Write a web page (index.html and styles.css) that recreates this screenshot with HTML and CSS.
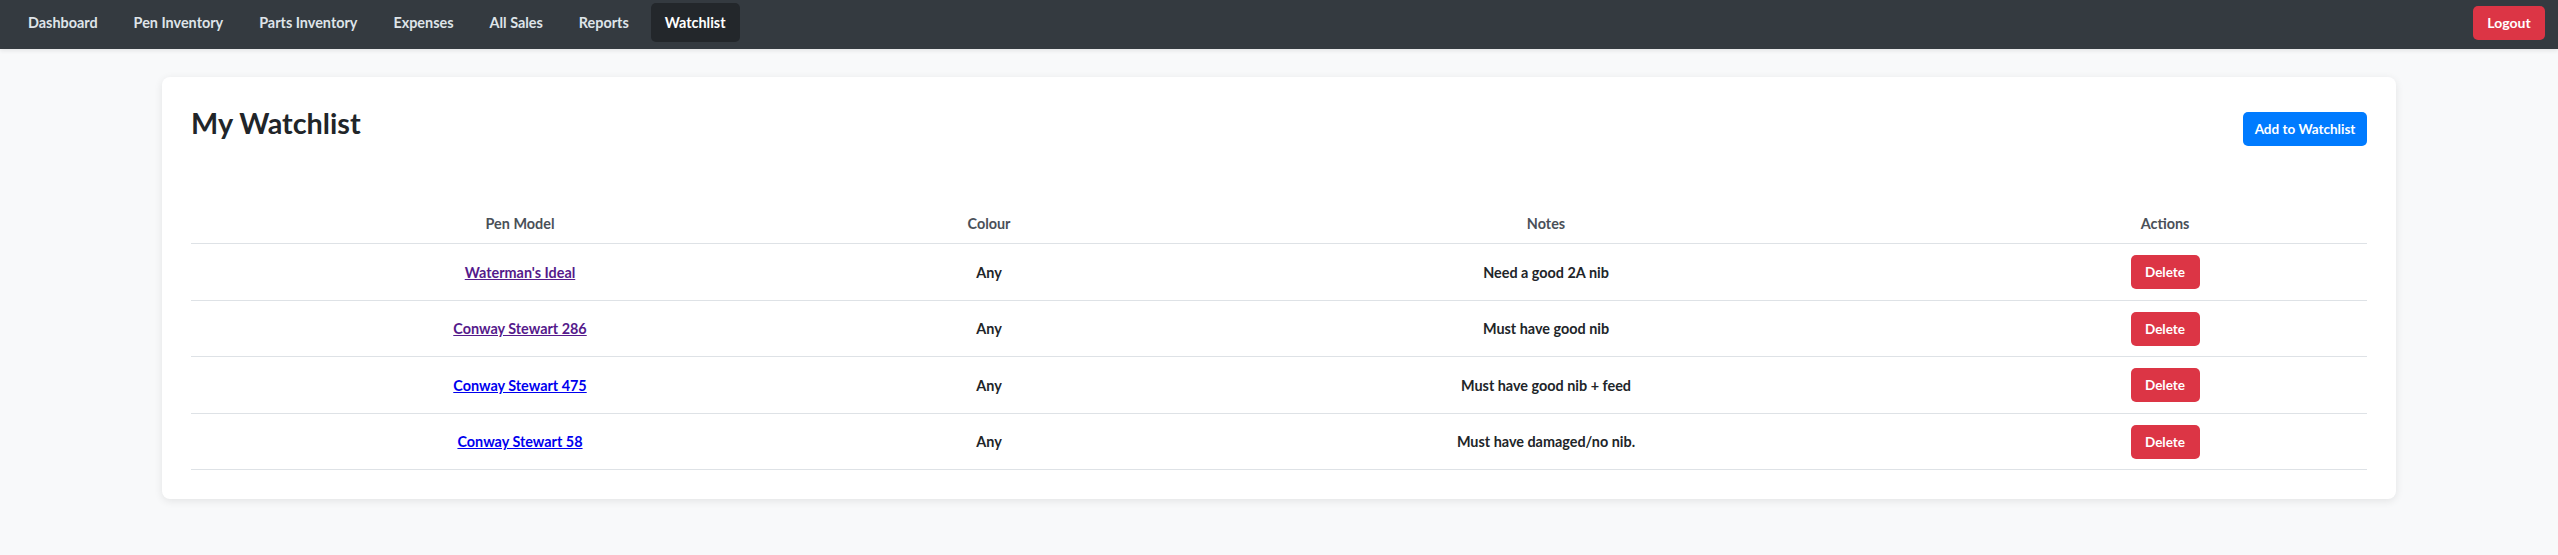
FILE: index.html
```html
<!DOCTYPE html>
<html lang="en">
<head>
<meta charset="utf-8">
<title>My Watchlist</title>
<link rel="stylesheet" href="styles.css">
</head>
<body>
<nav class="navbar">
  <ul class="nav-links">
    <li><a class="nav-link" href="#">Dashboard</a></li>
    <li><a class="nav-link" href="#">Pen Inventory</a></li>
    <li><a class="nav-link" href="#">Parts Inventory</a></li>
    <li><a class="nav-link" href="#">Expenses</a></li>
    <li><a class="nav-link" href="#">All Sales</a></li>
    <li><a class="nav-link" href="#">Reports</a></li>
    <li><a class="nav-link active" href="#">Watchlist</a></li>
  </ul>
  <button class="btn btn-danger btn-logout">Logout</button>
</nav>
<main class="page">
  <section class="card">
    <div class="card-header">
      <h2 class="title">My Watchlist</h2>
      <button class="btn btn-primary btn-add">Add to Watchlist</button>
    </div>
    <table class="watch-table">
      <thead>
        <tr>
          <th class="col-model">Pen Model</th>
          <th class="col-colour">Colour</th>
          <th class="col-notes">Notes</th>
          <th class="col-actions">Actions</th>
        </tr>
      </thead>
      <tbody>
        <tr>
          <td><a class="pen-link visited" href="#">Waterman's Ideal</a></td>
          <td>Any</td>
          <td>Need a good 2A nib</td>
          <td><button class="btn btn-danger btn-delete">Delete</button></td>
        </tr>
        <tr>
          <td><a class="pen-link visited" href="#">Conway Stewart 286</a></td>
          <td>Any</td>
          <td>Must have good nib</td>
          <td><button class="btn btn-danger btn-delete">Delete</button></td>
        </tr>
        <tr>
          <td><a class="pen-link" href="#">Conway Stewart 475</a></td>
          <td>Any</td>
          <td>Must have good nib + feed</td>
          <td><button class="btn btn-danger btn-delete">Delete</button></td>
        </tr>
        <tr>
          <td><a class="pen-link" href="#">Conway Stewart 58</a></td>
          <td>Any</td>
          <td>Must have damaged/no nib.</td>
          <td><button class="btn btn-danger btn-delete">Delete</button></td>
        </tr>
      </tbody>
    </table>
  </section>
</main>
</body>
</html>
```

FILE: styles.css
```css
* { box-sizing: border-box; }

html, body {
  margin: 0;
  padding: 0;
}

body {
  background: #f8f9fa;
  font-family: Lato, "Open Sans", "Liberation Sans", sans-serif;
  color: #212529;
  font-size: 14.4px;
  line-height: 1.5;
}

.navbar {
  display: flex;
  align-items: center;
  justify-content: space-between;
  height: 49px;
  padding: 3px 13px 7px 14px;
  background: #343a40;
  box-shadow: 0 2px 4px rgba(0, 0, 0, 0.08);
}

.nav-links {
  display: flex;
  gap: 8px;
  list-style: none;
  margin: 0;
  padding: 0;
}

.nav-link {
  display: block;
  padding: 10px 14px;
  line-height: 19px;
  font-size: 14.4px;
  font-weight: 700;
  color: #dfe4e9;
  text-decoration: none;
  border-radius: 5px;
}

.nav-link.active {
  background: #23272b;
  color: #ffffff;
}

.btn {
  font-family: Lato, "Open Sans", "Liberation Sans", sans-serif;
  font-weight: 700;
  font-size: 13.5px;
  line-height: 18px;
  color: #fff;
  border: none;
  border-radius: 5px;
  height: 34px;
  padding: 0;
  cursor: pointer;
}

.btn-danger { background: #dc3545; }
.btn-primary { background: #007bff; }

.btn-logout {
  width: 72px;
  font-size: 14px;
}

.page {
  padding: 28px 162px 40px;
}

.card {
  background: #fff;
  border-radius: 8px;
  box-shadow: 0 2px 8px rgba(0, 0, 0, 0.09);
  padding: 29px;
}

.card-header {
  display: flex;
  justify-content: space-between;
  align-items: flex-start;
  margin-bottom: 56px;
}

.title {
  margin: 0;
  font-size: 28.8px;
  line-height: 1.2;
  font-weight: 700;
  color: #212529;
}

.btn-add {
  margin-top: 6px;
  width: 124px;
}

.watch-table {
  width: 100%;
  border-collapse: collapse;
  table-layout: fixed;
}

.col-model { width: 658px; }
.col-colour { width: 280px; }
.col-notes { width: 834px; }
.col-actions { width: 404px; }

.watch-table th {
  padding: 11px 12px 9px;
  font-size: 14.4px;
  line-height: 21px;
  font-weight: 700;
  color: #4a5058;
  text-align: center;
  border-bottom: 1px solid #dee2e6;
}

.watch-table td {
  padding: 11px 12px 10.5px;
  text-align: center;
  vertical-align: middle;
  font-weight: 700;
  color: #212529;
  line-height: 21px;
  border-bottom: 1px solid #dee2e6;
}

.pen-link {
  color: #0000ee;
  text-decoration: underline;
  font-weight: 700;
}

.pen-link.visited { color: #551a8b; }

.btn-delete {
  width: 69px;
  vertical-align: middle;
}
```
